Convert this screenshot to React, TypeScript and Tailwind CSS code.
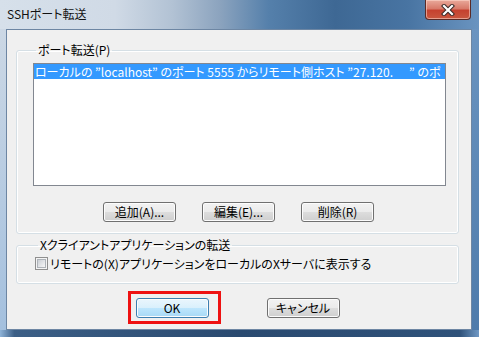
import React from "react"

const jp = "font-['Noto_Sans_CJK_JP',sans-serif] [font-feature-settings:'palt']"

function WinButton({label,def}:{label:string,def?:boolean}){
    const cls = def
        ? "border-[#3c7fb1] bg-[linear-gradient(180deg,#eaf6fd_0%,#d9f0fc_50%,#bee6fd_50%,#a7d9f5_100%)]"
        : "border-[#707070] bg-[linear-gradient(180deg,#f2f2f2_0%,#ebebeb_50%,#dddddd_50%,#cfcfcf_100%)]"
    return (
        <div className={"w-[73px] h-[20px] rounded-[3px] border flex items-center justify-center text-[12px] leading-none text-black shadow-[inset_0_0_0_1px_#fcfcfc] " + cls}>
            {label}
        </div>
    )
}

function CloseButton(){
    return (
        <div className="mr-[8px] w-[46px] h-[20px] rounded-b-[4px] border border-t-0 border-[#5a2a26] bg-[linear-gradient(180deg,#e9a99b_0%,#d87a6a_45%,#c5412f_55%,#c9573f_100%)] shadow-[inset_0_0_0_1px_rgba(255,220,210,0.55)] flex items-center justify-center">
            <svg width="14" height="12" viewBox="0 0 14 12">
                <path d="M3 2 L11 10 M11 2 L3 10" stroke="#3a2a28" strokeWidth="4.2" strokeLinecap="square" />
                <path d="M3 2 L11 10 M11 2 L3 10" stroke="#ffffff" strokeWidth="2.2" strokeLinecap="square" />
            </svg>
        </div>
    )
}

function CheckBox(){
    return (
        <div className="w-[13px] h-[13px] border border-[#8f8f8f] bg-[#f4f4f4] flex items-center justify-center">
            <div className="w-[9px] h-[9px] border border-[#aeb3b9] bg-[linear-gradient(135deg,#cbcfd5,#f7f7f7)]"></div>
        </div>
    )
}

export default function App(){
    return (
        <div className={"w-[479px] h-[337px] flex flex-col overflow-hidden " + jp}>
            {/* title bar */}
            <div className="h-[29px] flex items-start justify-between bg-[linear-gradient(90deg,#d6e0ea_0%,#d0dae6_24%,#b2c2d4_36%,#8ba3be_46%,#5580ab_56%,#3e6894_70%,#4874a2_85%,#6a94c0_100%)]">
                <div className="pl-[7px] pt-[6px] text-[12px] leading-[16px] text-[#111]">SSHポート転送</div>
                <CloseButton />
            </div>

            <div className="flex h-[301px]">
                <div className="w-[6px] bg-[linear-gradient(180deg,#ccd8e5,#a4c0de)]"></div>

                {/* client area */}
                <div className="w-[466px] h-[301px] border border-[#6d86a3] bg-[#f0f0f0] pl-[9px] pr-[12px] pt-[13px] text-black">
                    <fieldset className="border border-[#d5dfe5] rounded-[3px] shadow-[inset_0_0_0_1px_#ffffff] pl-[16px] pr-[12px] pb-[11px]">
                        <legend className="ml-[3px] px-[2px] text-[12px] leading-[14px]">ポート転送(P)</legend>
                        <div className="mt-[6px] w-[413px] h-[123px] border border-[#828790] bg-white">
                            <div className="h-[15px] bg-[#3399ff] text-white text-[12px] leading-[15px] pl-[1px] whitespace-pre overflow-hidden">
                                ローカルの ”localhost” のポート 5555 からリモート側ホスト ”27.120.      ” のポ
                            </div>
                        </div>
                        <div className="mt-[16px] pl-[70px] flex gap-[26px]">
                            <WinButton label="追加(A)..." />
                            <WinButton label="編集(E)..." />
                            <WinButton label="削除(R)" />
                        </div>
                    </fieldset>

                    <fieldset className="mt-[4px] border border-[#d5dfe5] rounded-[3px] shadow-[inset_0_0_0_1px_#ffffff] pl-[18px] pb-[13px]">
                        <legend className="ml-[3px] px-[2px] text-[12px] leading-[14px]">Xクライアントアプリケーションの転送</legend>
                        <div className="mt-[5px] flex items-center gap-[2px] h-[13px]">
                            <CheckBox />
                            <span className="text-[12px] leading-[13px]">リモートの(X)アプリケーションをローカルのXサーバに表示する</span>
                        </div>
                    </fieldset>

                    <div className="mt-[14px] flex justify-center gap-[58px]">
                        <div className="relative">
                            <WinButton label="OK" def />
                            <div className="absolute -left-[8px] -right-[12px] -top-[7px] -bottom-[6px] border-[3px] border-[#ee1111]"></div>
                        </div>
                        <WinButton label="キャンセル" />
                    </div>
                </div>

                <div className="w-[7px] bg-[linear-gradient(180deg,#6b94c0,#4e7bab)]"></div>
            </div>

            <div className="h-[7px] bg-[linear-gradient(90deg,#8eb3d8_0%,#3c5f86_3%,#2a4a70_50%,#2f527a_96%,#6f98c4_100%)]"></div>
        </div>
    )
}
